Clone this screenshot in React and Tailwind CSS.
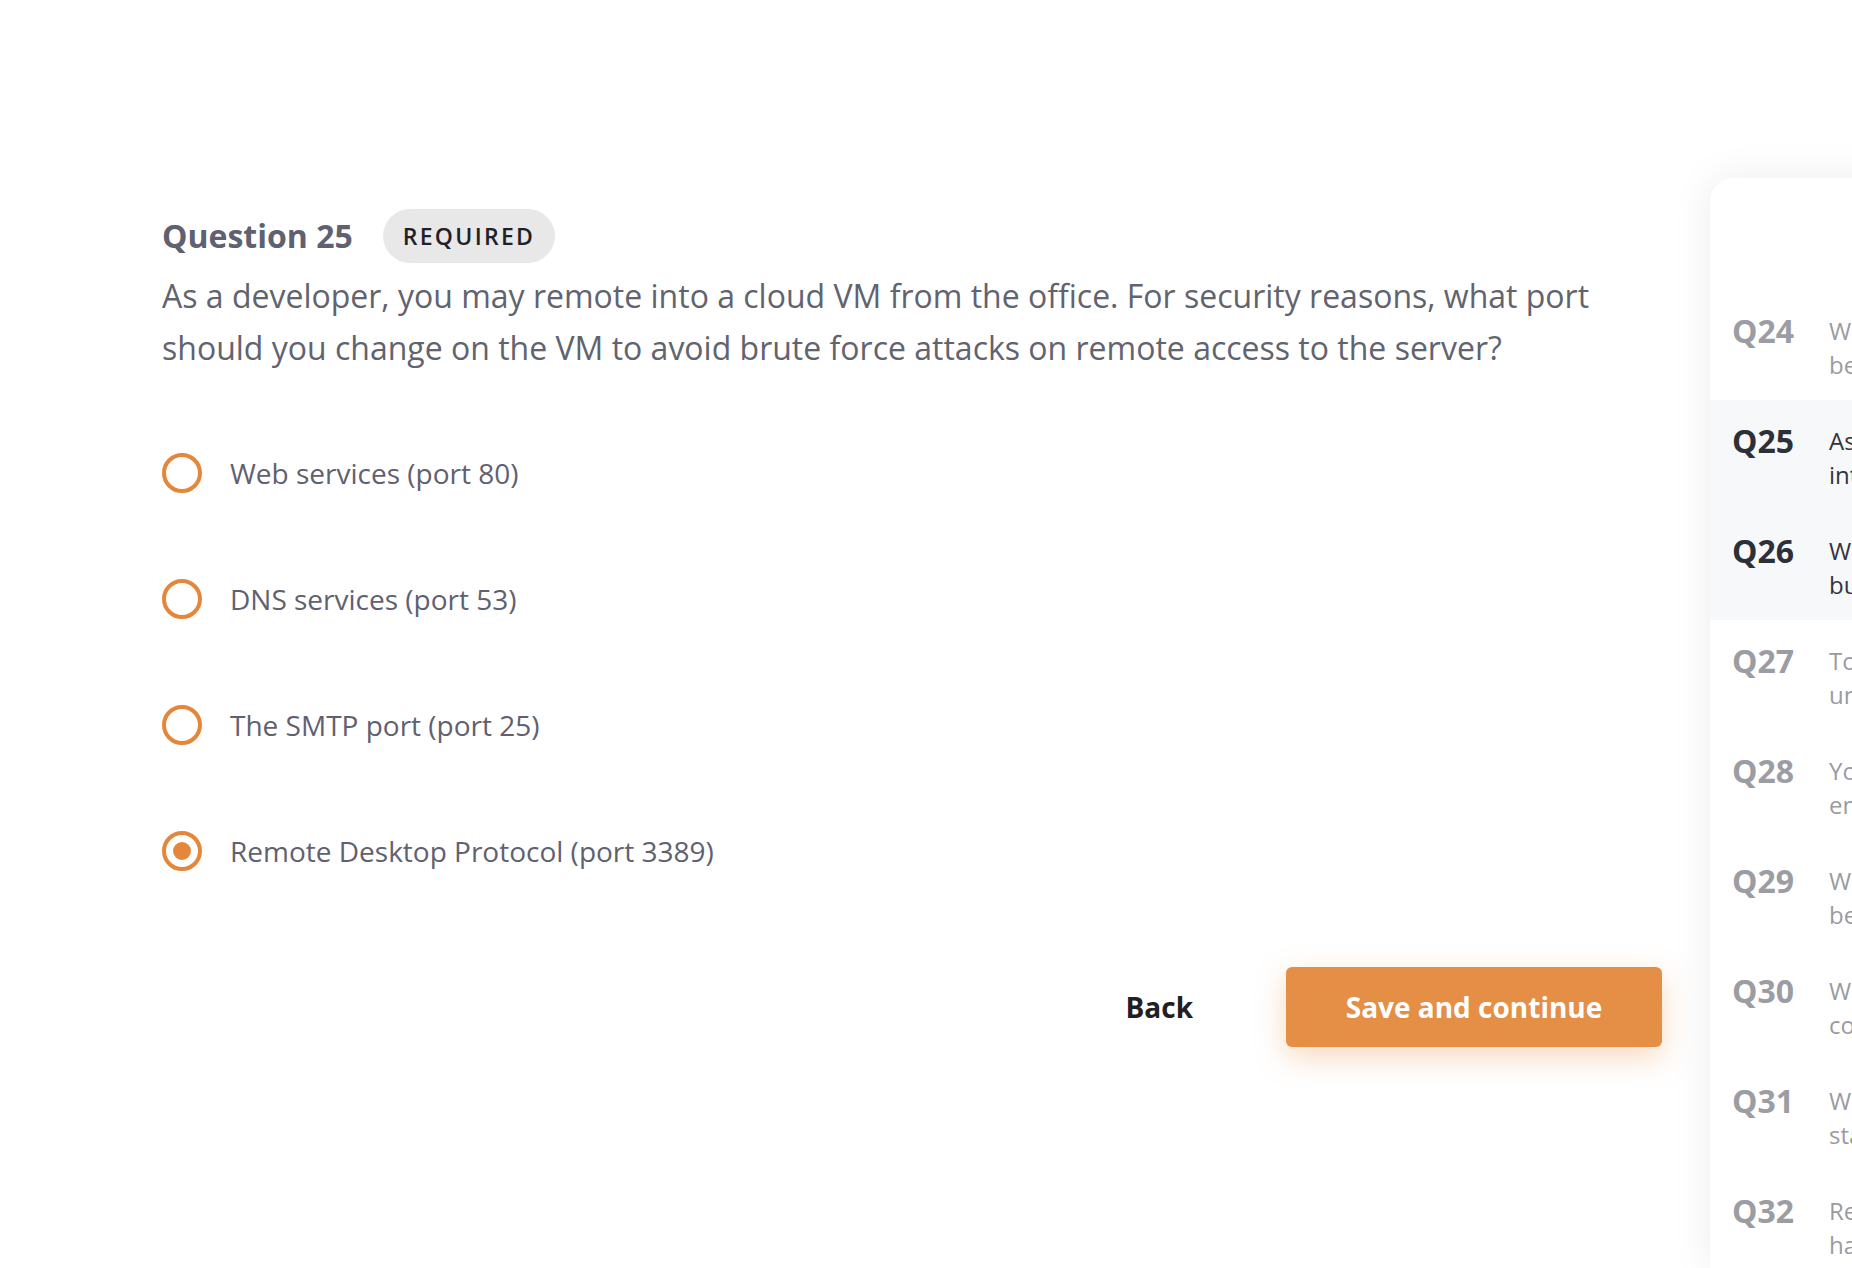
import React, { useState } from 'react';

const options = [
  'Web services (port 80)',
  'DNS services (port 53)',
  'The SMTP port (port 25)',
  'Remote Desktop Protocol (port 3389)',
];

const questions = [
  { n: 24, lines: ['Which of the following is the', 'best way to secure a network?'], state: 'done' },
  { n: 25, lines: ['As a developer, you may remote', 'into a cloud VM from the office.'], state: 'active' },
  { n: 26, lines: ['Which of these tools is', 'built into the operating system?'], state: 'active' },
  { n: 27, lines: ['To prevent', 'unauthorized access, you should'], state: 'todo' },
  { n: 28, lines: ['Your company wants to', 'encrypt all traffic between sites.'], state: 'todo' },
  { n: 29, lines: ['What is the', 'best practice for storing keys?'], state: 'todo' },
  { n: 30, lines: ['Which of the following', 'commands shows open ports?'], state: 'todo' },
  { n: 31, lines: ['What does a firewall', 'stateful inspection do?'], state: 'todo' },
  { n: 32, lines: ['Remote workers', 'have reported slow connections.'], state: 'todo' },
  { n: 33, lines: ['Which protocol is', 'used for secure file transfer?'], state: 'todo' },
];

const App = () => {
  const [selected, setSelected] = useState(3);

  return (
    <div className="w-full h-[1268px] overflow-hidden bg-white flex font-['Open_Sans',sans-serif]">
      {/* Question area */}
      <div className="w-[1662px] shrink-0 pl-[162px] pt-[209px] flex flex-col">
        <div className="flex items-center gap-[30px] h-[54px]">
          <h2 className="text-[32px] font-bold text-[#5f6170] leading-none">Question 25</h2>
          <span className="h-[54px] px-[20px] flex items-center rounded-full bg-[#e8e8e8] text-[23px] font-semibold tracking-[0.1em] text-[#1f2126]">
            REQUIRED
          </span>
        </div>

        <p className="mt-[7px] w-[1450px] text-[32px] leading-[52px] text-[#61636f]">
          As a developer, you may remote into a cloud VM from the office. For security reasons, what port should you change on the VM to avoid brute force attacks on remote access to the server?
        </p>

        <div className="mt-[79px] flex flex-col gap-[86px]">
          {options.map((opt, i) => (
            <button
              key={opt}
              onClick={() => setSelected(i)}
              className="flex items-center gap-[28px] h-[40px] text-left"
            >
              <span className="w-[40px] h-[40px] rounded-full border-[4px] border-[#e5873a] flex items-center justify-center shrink-0">
                {selected === i && <span className="w-[18px] h-[18px] rounded-full bg-[#e5873a]"></span>}
              </span>
              <span className="text-[28px] text-[#5f6170]">{opt}</span>
            </button>
          ))}
        </div>

        <div className="mt-[96px] flex items-center justify-end gap-[93px]">
          <button className="text-[28px] font-bold text-[#1f2024]">Back</button>
          <button className="w-[376px] h-[80px] rounded-[6px] bg-[#e58e45] text-white text-[28px] font-bold shadow-[0_10px_30px_rgba(229,142,69,0.35)]">
            Save and continue
          </button>
        </div>
      </div>

      {/* Question list panel */}
      <div className="ml-[48px] mt-[178px] w-[600px] shrink-0 bg-white rounded-tl-[24px] shadow-[0_0_40px_rgba(0,0,0,0.08)] pt-[112px]">
        {questions.map((q) => (
          <div
            key={q.n}
            className={`flex pl-[22px] pt-[24px] pb-[18px] ${q.state === 'active' ? 'bg-[#f7f8f9]' : ''}`}
          >
            <span
              className={`w-[97px] shrink-0 text-[32px] font-bold leading-[34px] ${q.state === 'active' ? 'text-[#2e3038]' : 'text-[#9c9da3]'}`}
            >
              Q{q.n}
            </span>
            <div className={`text-[24px] leading-[34px] whitespace-nowrap ${q.state === 'active' ? 'text-[#33343b]' : 'text-[#9a9ba0]'}`}>
              <div>{q.lines[0]}</div>
              <div>{q.lines[1]}</div>
            </div>
          </div>
        ))}
      </div>
    </div>
  );
};

export default App;
